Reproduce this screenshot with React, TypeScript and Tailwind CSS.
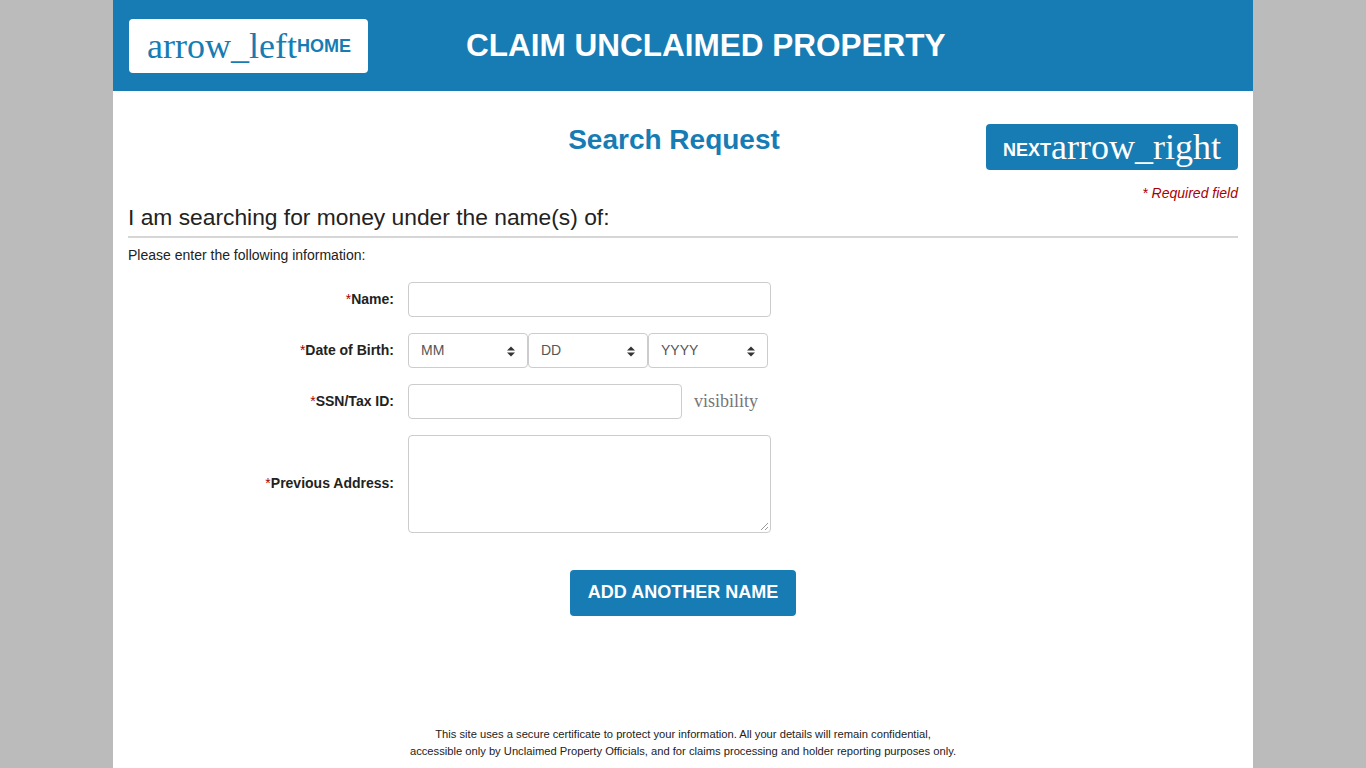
import React from "react";

const SANS = "font-['Liberation_Sans',Arial,sans-serif]";
const SERIF = "font-['Liberation_Serif','Times_New_Roman',serif]";

function Label({ children }: { children: React.ReactNode }) {
  return (
    <div className="w-[280px] pr-[14px] text-right text-[14px] font-bold text-[#222]">
      <span className="text-[#a00] font-normal">*</span>
      {children}
    </div>
  );
}

function Select({ placeholder }: { placeholder: string }) {
  return (
    <div className="relative w-[120px] h-[35px] border border-[#ccc] rounded-[4px] bg-white flex items-center pl-[12px] text-[14px] text-[#555]">
      {placeholder}
      <svg className="absolute right-[12px] top-[12px]" width="8" height="11" viewBox="0 0 8 11">
        <path d="M0 4.5 L4 0.5 L8 4.5 Z" fill="#333" />
        <path d="M0 6.5 L4 10.5 L8 6.5 Z" fill="#333" />
      </svg>
    </div>
  );
}

export default function App() {
  return (
    <div className={`min-h-[768px] bg-[#bbbbbb] ${SANS}`}>
      <div className="mx-auto w-[1140px] min-h-[768px] bg-white">
        <header className="h-[91px] bg-[#177cb3] flex items-center pl-[16px]">
          <div className="w-[239px] h-[54px] bg-white rounded-[4px] flex items-center pl-[18px]">
            <span className={`${SERIF} text-[36px] leading-none text-[#177cb3]`}>arrow_left</span>
            <span className="text-[18px] font-bold text-[#177cb3] self-start mt-[14px]">HOME</span>
          </div>
          <h1 className="ml-[98px] text-[31.5px] font-bold text-white leading-none">CLAIM UNCLAIMED PROPERTY</h1>
        </header>

        <div className="px-[15px]">
          <div className="relative h-[109px]">
            <h2 className="absolute left-0 right-0 top-[35px] text-center text-[28px] font-bold text-[#177cb3] leading-none pr-[18px]">
              Search Request
            </h2>
            <div className="absolute right-0 top-[33px] w-[252px] h-[46px] bg-[#177cb3] rounded-[4px] flex items-center pl-[17px]">
              <span className="text-[18px] font-bold text-white self-start mt-[13px]">NEXT</span>
              <span className={`${SERIF} text-[36px] leading-none text-white`}>arrow_right</span>
            </div>
            <div className="absolute right-0 top-[95px] text-[14px] italic text-[#a00] leading-none">* Required field</div>
          </div>

          <div className="text-[22.8px] text-[#222] leading-none mt-[6px]">I am searching for money under the name(s) of:</div>
          <div className="mt-[7px] h-[2px] bg-[#d6d6d6]" />
          <div className="mt-[10px] text-[14px] text-[#222] leading-none">Please enter the following information:</div>

          <div className="mt-[20px] flex flex-col gap-[16px]">
            <div className="flex items-center">
              <Label>Name:</Label>
              <div className="w-[363px] h-[35px] border border-[#ccc] rounded-[4px]" />
            </div>
            <div className="flex items-center">
              <Label>Date of Birth:</Label>
              <Select placeholder="MM" />
              <Select placeholder="DD" />
              <Select placeholder="YYYY" />
            </div>
            <div className="flex items-center">
              <Label>SSN/Tax ID:</Label>
              <div className="w-[274px] h-[35px] border border-[#ccc] rounded-[4px]" />
              <span className={`${SERIF} ml-[12px] text-[18px] text-[#777]`}>visibility</span>
            </div>
            <div className="flex items-center">
              <Label>Previous Address:</Label>
              <div className="relative w-[363px] h-[98px] border border-[#ccc] rounded-[4px]">
                <svg className="absolute right-[1px] bottom-[1px]" width="9" height="9" viewBox="0 0 9 9">
                  <path d="M8 1 L1 8 M8 5 L5 8" stroke="#999" strokeWidth="1" />
                </svg>
              </div>
            </div>
          </div>

          <div className="mt-[37px] flex justify-center">
            <div className="w-[226px] h-[46px] bg-[#177cb3] rounded-[4px] flex items-center justify-center text-[18px] font-bold text-white">
              ADD ANOTHER NAME
            </div>
          </div>

          <div className="mt-[110px] text-center text-[11.2px] leading-[17px] text-[#222]">
            This site uses a secure certificate to protect your information. All your details will remain confidential,
            <br />
            accessible only by Unclaimed Property Officials, and for claims processing and holder reporting purposes only.
          </div>
        </div>
      </div>
    </div>
  );
}
